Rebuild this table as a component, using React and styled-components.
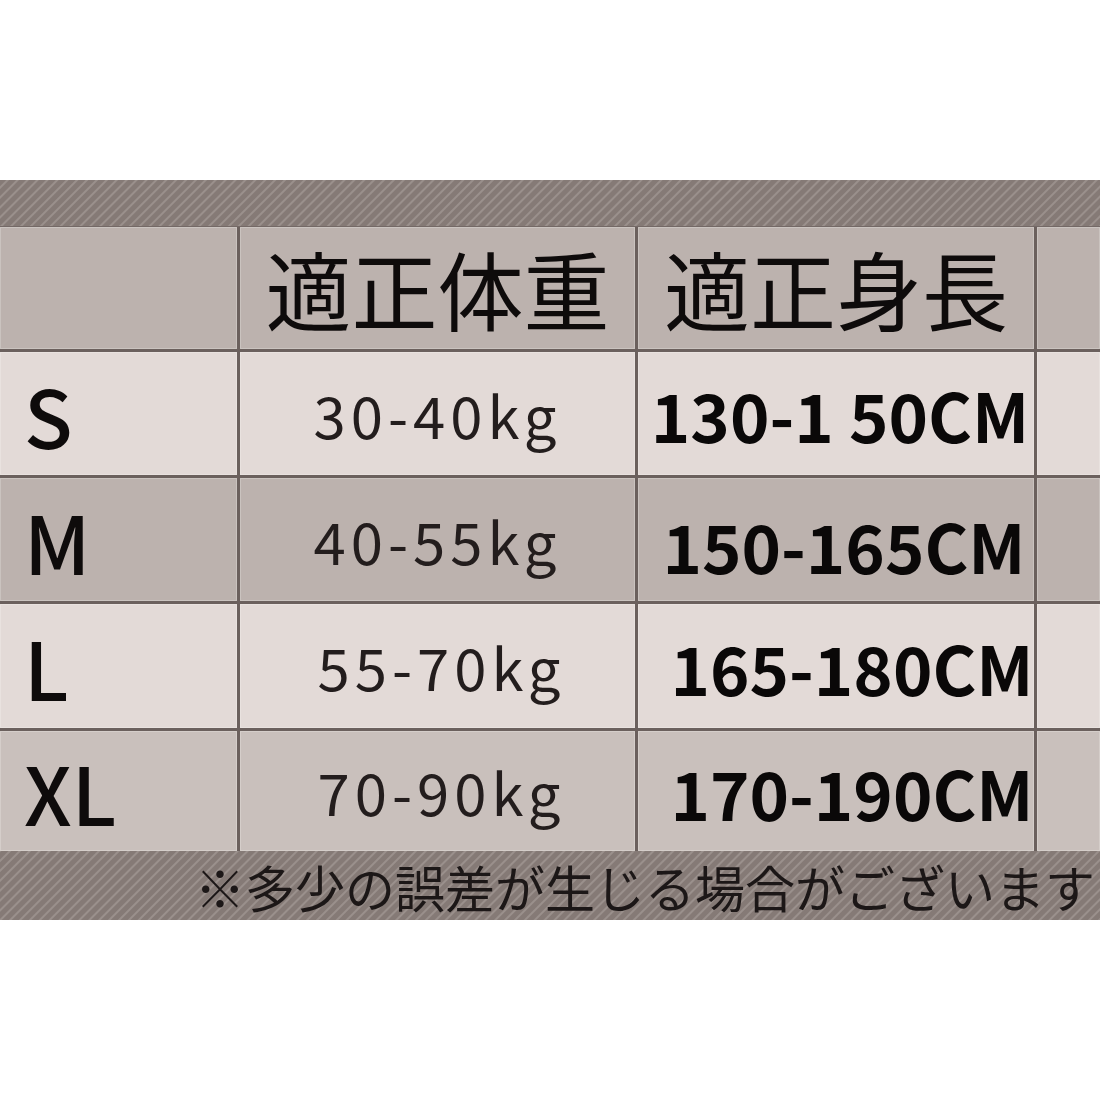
import React from 'react';
import styled, { createGlobalStyle } from 'styled-components';

const GlobalStyle = createGlobalStyle`
  html, body {
    margin: 0;
    padding: 0;
    background: #ffffff;
  }
  body {
    font-family: "Noto Sans CJK JP", "Noto Sans", sans-serif;
    color: #141010;
  }
`;

const stripes = `
  background-color: #857a76;
  background-image: repeating-linear-gradient(
    135deg,
    #857a76 0px,
    #857a76 4px,
    #9a908c 5px,
    #9a908c 6px,
    #857a76 7px
  );
`;

const Page = styled.div`
  width: 1100px;
  height: 1100px;
  padding-top: 180px;
  box-sizing: border-box;
  overflow: hidden;
`;

const Band = styled.section`
  ${stripes}
  display: flex;
  flex-direction: column;
  height: 740px;
`;

const StripeTop = styled.div`
  height: 46px;
`;

const Grid = styled.div`
  display: grid;
  grid-template-columns: 237px 395px 396px 1fr;
  grid-template-rows: 122px 123px 123px 124px 120px;
  gap: 3px;
  background: #6b605d;
  border-top: 1px solid #746966;
`;

const Cell = styled.div`
  display: flex;
  align-items: center;
  justify-content: ${p => (p.$left ? 'flex-start' : 'center')};
  background: ${p => p.$bg};
  box-shadow: inset 0 0 0 1px rgba(255, 255, 255, 0.22);
  padding-left: ${p => p.$px || 0}px;
  padding-top: ${p => p.$py || 0}px;
  box-sizing: border-box;
  white-space: nowrap;
`;

const HeadText = styled.span`
  font-family: "Noto Sans CJK JP", sans-serif;
  font-size: 86px;
  font-weight: 400;
  line-height: 1;
  color: #0e0b0b;
`;

const SizeText = styled.span`
  font-family: "Noto Sans CJK JP", sans-serif;
  font-size: 80px;
  font-weight: 500;
  line-height: 1;
  color: #0e0b0b;
`;

const WeightText = styled.span`
  font-family: "Noto Sans CJK JP", sans-serif;
  font-size: 58px;
  font-weight: 400;
  letter-spacing: 5px;
  line-height: 1;
  color: #231d1d;
`;

const HeightText = styled.span`
  font-family: "Noto Sans CJK JP", sans-serif;
  font-size: 67px;
  font-weight: 700;
  line-height: 1;
  color: #0a0808;
`;

const Note = styled.div`
  flex: 1;
  display: flex;
  align-items: center;
  padding-left: 195px;
  white-space: nowrap;
  overflow: hidden;
  font-family: "Noto Sans CJK JP", sans-serif;
  font-size: 50px;
  line-height: 1;
  color: #1c1717;
`;

const DARK = '#bcb2ae';
const LIGHT = '#e3dad7';

const rows = [
  { size: 'S', weight: '30-40kg', height: '130-1 50CM', bg: LIGHT, wx: -8, hx: 8 },
  { size: 'M', weight: '40-55kg', height: '150-165CM', bg: DARK, wx: 0, hx: 16, hy: 10 },
  { size: 'L', weight: '55-70kg', height: '165-180CM', bg: LIGHT, wx: 8, hx: 32 },
  { size: 'XL', weight: '70-90kg', height: '170-190CM', bg: '#c9c0bc', wx: 8, hx: 32 },
];

function SizeTable() {
  return (
    <Grid>
      <Cell $bg={DARK} />
      <Cell $bg={DARK}>
        <HeadText>適正体重</HeadText>
      </Cell>
      <Cell $bg={DARK}>
        <HeadText>適正身長</HeadText>
      </Cell>
      <Cell $bg={DARK} />
      {rows.map(r => (
        <React.Fragment key={r.size}>
          <Cell $bg={r.bg} $left $px={24}>
            <SizeText>{r.size}</SizeText>
          </Cell>
          <Cell $bg={r.bg} $px={r.wx}>
            <WeightText>{r.weight}</WeightText>
          </Cell>
          <Cell $bg={r.bg} $px={r.hx} $py={r.hy}>
            <HeightText>{r.height}</HeightText>
          </Cell>
          <Cell $bg={r.bg} />
        </React.Fragment>
      ))}
    </Grid>
  );
}

export default function App() {
  return (
    <Page>
      <GlobalStyle />
      <Band>
        <StripeTop />
        <SizeTable />
        <Note>※多少の誤差が生じる場合がございます</Note>
      </Band>
    </Page>
  );
}
